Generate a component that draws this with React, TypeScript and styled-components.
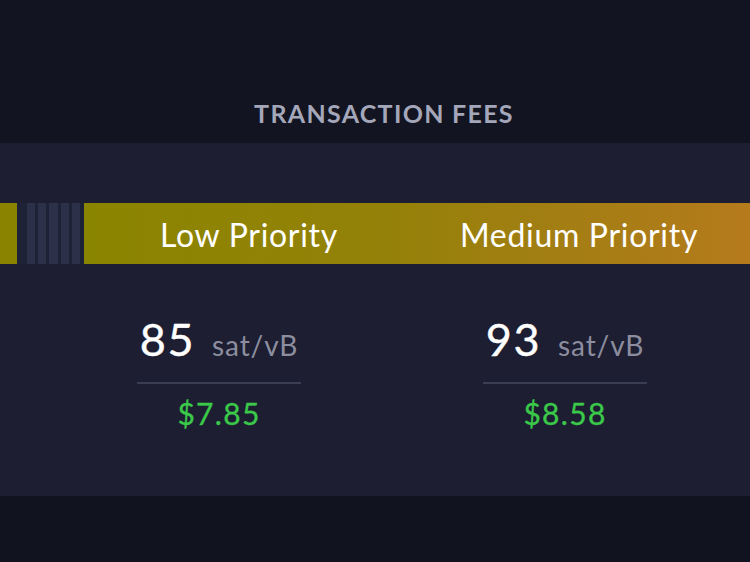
import React from "react";
import styled, { createGlobalStyle } from "styled-components";

const Global = createGlobalStyle`
  html, body { margin: 0; padding: 0; background: #121320; }
  body { font-family: Lato, "Open Sans", sans-serif; }
`;

const Page = styled.div`
  width: 750px;
  height: 562px;
  display: flex;
  flex-direction: column;
  overflow: hidden;
  background: #11131f;
`;

const Header = styled.header`
  height: 143px;
  box-sizing: border-box;
  padding-top: 101px;
  background: #131421;
  display: flex;
  justify-content: center;
`;

const Title = styled.h2`
  margin: 0 0 0 18px;
  font-size: 25px;
  line-height: 1;
  font-weight: 700;
  color: #a4a7ba;
  letter-spacing: 1.3px;
`;

const Card = styled.section`
  height: 353px;
  background: #1d1e32;
  padding-top: 60px;
  box-sizing: border-box;
`;

const Bar = styled.div`
  height: 61px;
  display: flex;
`;

const Segment = styled.div`
  width: 17px;
  background: #8a8300;
`;

const Stripes = styled.div`
  width: 67px;
  box-sizing: border-box;
  padding: 0 4px 0 10px;
  display: flex;
  gap: 3px;
  background: #1e2236;
`;

const Stripe = styled.div`
  flex: 1;
  background: #2c3149;
`;

const MainBar = styled.div`
  flex: 1;
  display: flex;
  align-items: center;
  background: linear-gradient(to right, #8a8500 0%, #948109 45%, #a87d16 80%, #b57a1c 100%);
`;

const Label = styled.div`
  width: 330px;
  text-align: center;
  color: #ffffff;
  font-size: 32px;
  letter-spacing: 0.7px;
  line-height: 1;
  padding-top: 2px;
`;

const Fees = styled.div`
  display: flex;
  padding-left: 46px;
  margin-top: 53px;
`;

const FeeCol = styled.div`
  width: 346px;
  display: flex;
  flex-direction: column;
  align-items: center;
`;

const ValueRow = styled.div`
  display: flex;
  align-items: baseline;
  gap: 17px;
  padding: 0 3px 20px;
  border-bottom: 2px solid #3b3e52;
`;

const Num = styled.span`
  font-size: 45px;
  letter-spacing: 1.5px;
  line-height: 1;
  color: #ffffff;
  -webkit-text-stroke: 0.4px #ffffff;
`;

const Unit = styled.span`
  font-size: 28px;
  letter-spacing: 0.9px;
  line-height: 1;
  color: #8c8e9f;
`;

const Fiat = styled.div`
  margin-top: 14px;
  font-size: 30px;
  letter-spacing: 1.3px;
  line-height: 1;
  color: #3bc94a;
  -webkit-text-stroke: 0.3px #3bc94a;
`;

const fees = [
  { label: "Low Priority", value: 85, fiat: "$7.85" },
  { label: "Medium Priority", value: 93, fiat: "$8.58" },
];

export default function App() {
  return (
    <>
      <Global />
      <Page>
        <Header>
          <Title>TRANSACTION FEES</Title>
        </Header>
        <Card>
          <Bar>
            <Segment />
            <Stripes>
              {[0, 1, 2, 3, 4].map((i) => (
                <Stripe key={i} />
              ))}
            </Stripes>
            <MainBar>
              {fees.map((f) => (
                <Label key={f.label}>{f.label}</Label>
              ))}
            </MainBar>
          </Bar>
          <Fees>
            {fees.map((f) => (
              <FeeCol key={f.label}>
                <ValueRow>
                  <Num>{f.value}</Num>
                  <Unit>sat/vB</Unit>
                </ValueRow>
                <Fiat>{f.fiat}</Fiat>
              </FeeCol>
            ))}
          </Fees>
        </Card>
      </Page>
    </>
  );
}
